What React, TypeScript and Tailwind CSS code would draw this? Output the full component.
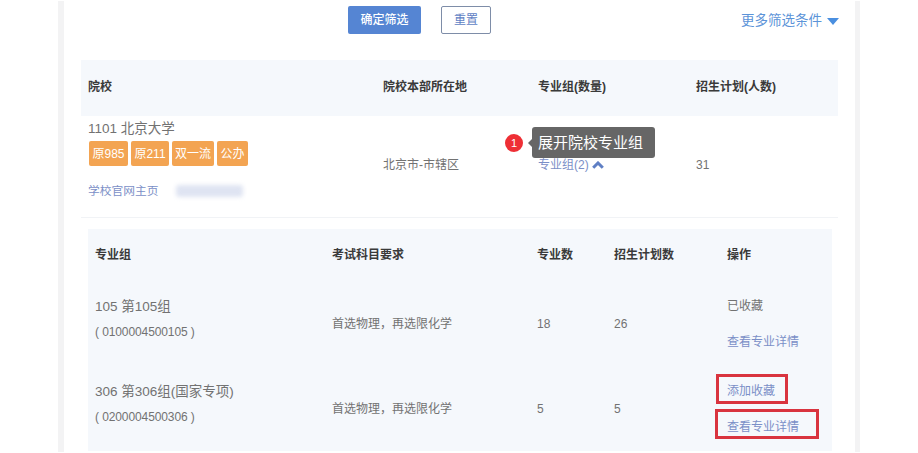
const font = "font-['Liberation_Sans','Noto_Sans_CJK_SC',sans-serif]";

const tags = [
  { text: "原985", w: "w-[39px]" },
  { text: "原211", w: "w-[38px]" },
  { text: "双一流", w: "w-[42px]" },
  { text: "公办", w: "w-[31px]" },
];

const groups = [
  {
    name: "105 第105组",
    code: "( 0100004500105 )",
    req: "首选物理\uFF0C再选限化学",
    majors: "18",
    plan: "26",
    saved: true,
  },
  {
    name: "306 第306组(国家专项)",
    code: "( 0200004500306 )",
    req: "首选物理\uFF0C再选限化学",
    majors: "5",
    plan: "5",
    saved: false,
  },
];

const SchoolHead = () => (
  <div className="grid grid-cols-[295px_155px_158px_1fr] items-center h-14 pl-[7px] pb-[2px] mx-[17px] bg-[#f5f8fc] text-xs font-bold text-[#3a3a3a]">
    <div>院校</div>
    <div>院校本部所在地</div>
    <div>专业组(数量)</div>
    <div>招生计划(人数)</div>
  </div>
);

const SchoolRow = () => (
  <div className="grid grid-cols-[295px_155px_158px_1fr] items-center h-[102px] pl-[7px] mx-[17px] border-b border-[#f1f3f6] text-xs text-[#727272]">
    <div className="flex flex-col self-start mt-[4px]">
      <div className="text-[13.5px] leading-[18px]">1101 北京大学</div>
      <div className="flex gap-[3px] mt-[3px] ml-px">
        {tags.map((t) => (
          <div
            key={t.text}
            className={`${t.w} h-[25px] flex items-center justify-center rounded-[2px] bg-[#f3a452] text-white`}
          >
            {t.text}
          </div>
        ))}
      </div>
      <div className="flex items-center mt-[17px] h-[16px]">
        <span className="text-[11.75px] text-[#7b8fc7]">学校官网主页</span>
        <div className="ml-[17px] w-[67px] h-[12px] rounded-[3px] bg-[#dfe4f2] blur-[2px]" />
      </div>
    </div>
    <div className="mb-[3px]">北京市-市辖区</div>
    <div className="relative mb-[3px] flex items-center gap-[3px] text-[#7b8fc7]">
      <span>专业组(2)</span>
      <svg width="12" height="8" viewBox="0 0 12 8">
        <path d="M1.2 6.8 6 2l4.8 4.8" fill="none" stroke="#5f7fc4" strokeWidth="3" />
      </svg>
      <div className="absolute left-[-33px] top-[-23px] w-[18px] h-[18px] rounded-full bg-[#ee2f35] text-white text-[11px] flex items-center justify-center">
        1
      </div>
      <div className="absolute left-[-6px] top-[-30px] w-[123px] h-[31px] rounded-[3px] bg-[#666666] text-white text-[15px] flex items-center pl-[6px]">
        <div className="absolute left-[-4px] top-[12px] w-0 h-0 border-y-[4px] border-y-transparent border-r-[4px] border-r-[#666666]" />
        展开院校专业组
      </div>
    </div>
    <div className="mb-[3px]">31</div>
  </div>
);

const GroupRow = ({ g }: { g: (typeof groups)[number] }) => (
  <div className="grid grid-cols-[237px_205px_77px_113px_1fr] items-center h-[85px] pl-[7px] text-xs text-[#727272]">
    <div className="flex flex-col gap-[7px] mb-[9px]">
      <div className="text-[13.5px] leading-[18px]">{g.name}</div>
      <div className="text-xs tracking-[-0.1px] leading-[18px]">{g.code}</div>
    </div>
    <div>{g.req}</div>
    <div>{g.majors}</div>
    <div>{g.plan}</div>
    <div className="flex flex-col gap-[20px] leading-[16px]">
      {g.saved ? (
        <div>已收藏</div>
      ) : (
        <div className="relative text-[#7b8fc7]">
          添加收藏
          <div className="absolute left-[-11px] top-[-9px] w-[72px] h-[30px] border-[3px] border-[#d9343f]" />
        </div>
      )}
      <div className="relative text-[#7b8fc7]">
        查看专业详情
        {!g.saved && (
          <div className="absolute left-[-12px] top-[-10px] w-[104px] h-[30px] border-[3px] border-[#d9343f]" />
        )}
      </div>
    </div>
  </div>
);

export default function App() {
  return (
    <div className={`w-[918px] h-[453px] overflow-hidden bg-white pl-[58px] pt-px ${font}`}>
      <div className="w-[802px] h-[451px] overflow-hidden border-l-[6px] border-r-[5px] border-[#f3f3f4]">
        <div className="flex items-start h-[59px] pt-[5px]">
          <div className="ml-[284px] w-[73px] h-[28px] rounded-[2px] bg-[#5585d3] text-white text-xs font-medium flex items-center justify-center">
            确定筛选
          </div>
          <div className="ml-5 w-[50px] h-[28px] rounded-[2px] border border-[#7e8da8] text-[#5f7fc4] text-xs flex items-center justify-center">
            重置
          </div>
          <div className="ml-auto mr-[16px] mt-px h-[28px] flex items-center gap-[5px] text-[13.5px] text-[#5b93d8]">
            更多筛选条件
            <svg width="12" height="7" viewBox="0 0 12 7">
              <path d="M0 0h12L6 7z" fill="#4a8fe0" />
            </svg>
          </div>
        </div>
        <SchoolHead />
        <SchoolRow />
        <div className="mt-[11px] ml-6 mr-[23px] bg-[#f5f8fc]">
          <div className="grid grid-cols-[237px_205px_77px_113px_1fr] items-center h-[52px] pl-[7px] text-xs font-bold text-[#3a3a3a]">
            <div>专业组</div>
            <div>考试科目要求</div>
            <div>专业数</div>
            <div>招生计划数</div>
            <div>操作</div>
          </div>
          {groups.map((g) => (
            <GroupRow key={g.name} g={g} />
          ))}
        </div>
      </div>
    </div>
  );
}
